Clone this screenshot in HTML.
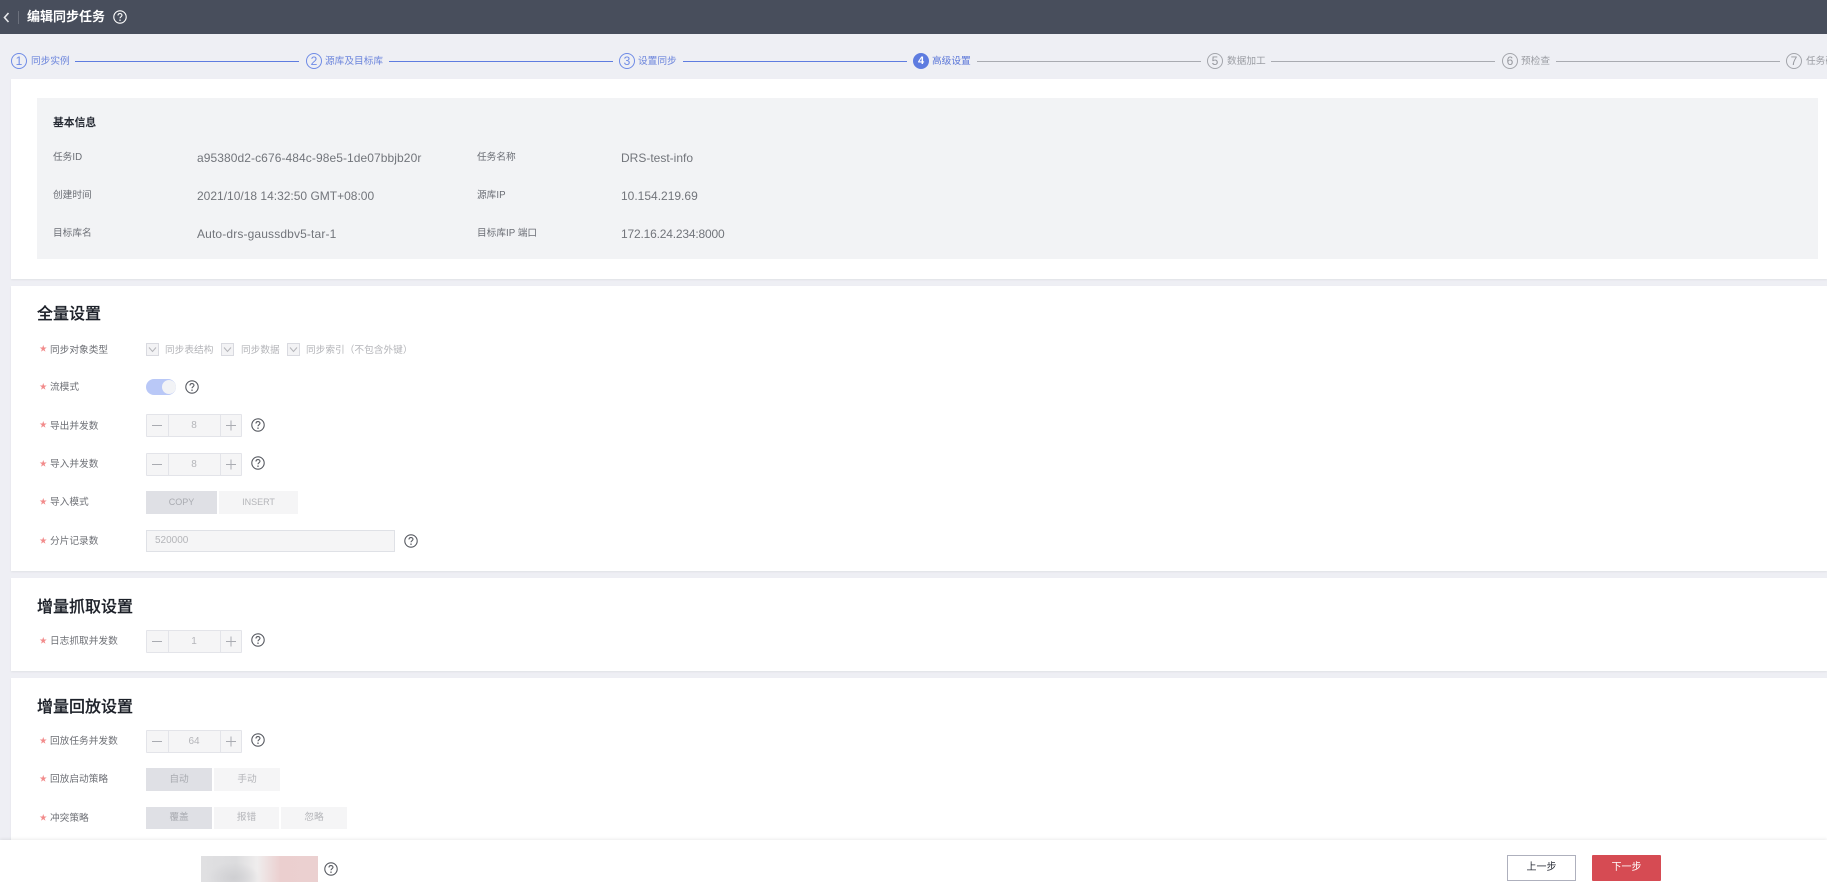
<!DOCTYPE html>
<html lang="zh">
<head>
<meta charset="utf-8">
<title>编辑同步任务</title>
<style>
*{box-sizing:border-box}
html,body{margin:0;padding:0;width:1827px;height:893px;overflow:hidden;background:#eeeff4;font-family:"Liberation Sans","Noto Sans CJK SC",sans-serif}
.a{position:absolute;white-space:nowrap}
.hdr{left:0;top:0;width:1827px;height:34px;background:#484e5c}
.pn{left:11px;width:1816px;background:#fff;box-shadow:0 1px 2px rgba(0,0,0,.06)}
.c{width:16px;height:16px;border-radius:50%;border:1px solid #6f8be6;color:#6f8be6;font-size:12px;line-height:14px;text-align:center;top:53px}
.c.g{border-color:#a3a5ab;color:#96989e}
.c.on{background:#5e7ce0;border-color:#5e7ce0;color:#fff;font-weight:bold;font-size:11px}
.st{font-size:9.7px;line-height:14px;top:55px;color:#6c85dc}
.st.g{color:#9b9da3}
.ln{height:1px;top:61px;background:#5e7ce0}
.ln.g{background:#a9abb1}
.k{font-size:9.7px;line-height:14px;color:#6b6e75}
.v{font-size:12px;line-height:14px;color:#72757b}
.t{left:37px;font-size:16px;line-height:22px;color:#1d2129;font-weight:500;-webkit-text-stroke:.2px #1d2129}
.s{left:39.5px;font-size:7.5px;line-height:14px;color:#f28b8b}
.l{left:50px;font-size:9.7px;line-height:14px;color:#6e7076}
.cb{width:13px;height:13px;background:#f3f3f5;border:1px solid #d9dae0;left:0}
.cb svg{display:block}
.ct{font-size:9.7px;line-height:14px;color:#b4b5b9;top:344px}
.num{left:146px;width:96px;height:23px;background:#f5f5f6;border:1px solid #e3e4e9;border-radius:1px;color:#b4b5b9;font-size:10px;line-height:22px;text-align:center}
.num i{position:absolute;top:0;height:21px;width:1px;background:#e3e4e9}
.num svg{position:absolute;top:5px}
.tab{height:23px;background:#f5f5f6;color:#b4b5b9;font-size:9.7px;line-height:23px;text-align:center}
.tab.on{background:#dfe0e5;color:#a9abb1}
.tab.e{font-size:9px}
.q{width:14px;height:14px}
</style>
</head>
<body>
<svg width="0" height="0" style="position:absolute"><defs><symbol id="h" viewBox="0 0 14 14"><circle cx="7" cy="7" r="6.2" fill="none" stroke="currentColor" stroke-width="1.1"/><path d="M5 5.5C5 4.3 5.9 3.6 7 3.6S9 4.3 9 5.3C9 6.6 7 6.7 7 8.2" fill="none" stroke="currentColor" stroke-width="1.1"/><circle cx="7" cy="10.1" r=".75" fill="currentColor"/></symbol></defs></svg>

<div class="a hdr"></div>
<svg class="a" style="left:3px;top:12px" width="7" height="11" viewBox="0 0 7 11"><path d="M5.5 1L1.5 5.5L5.5 10" fill="none" stroke="#e8e9ec" stroke-width="1.6"/></svg>
<div class="a" style="left:18px;top:11px;width:1px;height:13px;background:#6b707c"></div>
<div class="a" style="left:27px;top:8px;font-size:13px;line-height:18px;font-weight:bold;color:#fff">编辑同步任务</div>
<svg class="a q" style="left:113px;top:10px;color:#fff"><use href="#h"/></svg>

<div class="a c" style="left:11px">1</div><div class="a st" style="left:31px">同步实例</div><div class="a ln" style="left:75px;width:224px"></div>
<div class="a c" style="left:306px">2</div><div class="a st" style="left:325px">源库及目标库</div><div class="a ln" style="left:389px;width:224px"></div>
<div class="a c" style="left:619px">3</div><div class="a st" style="left:638px">设置同步</div><div class="a ln" style="left:683px;width:224px"></div>
<div class="a c on" style="left:913px">4</div><div class="a st" style="left:932px;color:#5a76d8">高级设置</div><div class="a ln g" style="left:977px;width:224px"></div>
<div class="a c g" style="left:1207px">5</div><div class="a st g" style="left:1227px">数据加工</div><div class="a ln g" style="left:1271px;width:224px"></div>
<div class="a c g" style="left:1502px">6</div><div class="a st g" style="left:1521px">预检查</div><div class="a ln g" style="left:1556px;width:224px"></div>
<div class="a c g" style="left:1786px">7</div><div class="a st g" style="left:1806px">任务确认</div>

<div class="a pn" style="top:79px;height:200px"></div>
<div class="a" style="left:37px;top:98px;width:1781px;height:161px;background:#f2f3f5"></div>
<div class="a" style="left:53px;top:116px;font-size:10.8px;line-height:14px;font-weight:bold;color:#262a33">基本信息</div>
<div class="a k" style="left:53px;top:151px">任务ID</div><div class="a v" style="left:197px;top:151px;letter-spacing:.08px">a95380d2-c676-484c-98e5-1de07bbjb20r</div>
<div class="a k" style="left:477px;top:151px">任务名称</div><div class="a v" style="left:621px;top:151px">DRS-test-info</div>
<div class="a k" style="left:53px;top:189px">创建时间</div><div class="a v" style="left:197px;top:189px">2021/10/18 14:32:50 GMT+08:00</div>
<div class="a k" style="left:477px;top:189px">源库IP</div><div class="a v" style="left:621px;top:189px">10.154.219.69</div>
<div class="a k" style="left:53px;top:227px">目标库名</div><div class="a v" style="left:197px;top:227px;letter-spacing:.14px">Auto-drs-gaussdbv5-tar-1</div>
<div class="a k" style="left:477px;top:227px">目标库IP 端口</div><div class="a v" style="left:621px;top:227px;letter-spacing:-.18px">172.16.24.234:8000</div>

<div class="a pn" style="top:286px;height:285px"></div>
<div class="a t" style="top:304px">全量设置</div>

<div class="a s" style="top:342px">★</div><div class="a l" style="top:344px">同步对象类型</div>
<div class="a cb" style="left:146px;top:343px"><svg width="11" height="11" viewBox="0 0 11 11"><path d="M2 3.5L5.5 7.5L9 3.5" fill="none" stroke="#b4b5b9" stroke-width="1"/></svg></div><div class="a ct" style="left:165px">同步表结构</div>
<div class="a cb" style="left:221px;top:343px"><svg width="11" height="11" viewBox="0 0 11 11"><path d="M2 3.5L5.5 7.5L9 3.5" fill="none" stroke="#b4b5b9" stroke-width="1"/></svg></div><div class="a ct" style="left:241px">同步数据</div>
<div class="a cb" style="left:287px;top:343px"><svg width="11" height="11" viewBox="0 0 11 11"><path d="M2 3.5L5.5 7.5L9 3.5" fill="none" stroke="#b4b5b9" stroke-width="1"/></svg></div><div class="a ct" style="left:306px">同步索引（不包含外键）</div>

<div class="a s" style="top:380px">★</div><div class="a l" style="top:381px">流模式</div>
<div class="a" style="left:146px;top:379px;width:30px;height:16px;border-radius:8px;background:#b9c8f7"></div>
<div class="a" style="left:162px;top:380px;width:14px;height:14px;border-radius:50%;background:#f2f3f6"></div>
<svg class="a q" style="left:185px;top:380px;color:#575a61"><use href="#h"/></svg>

<div class="a s" style="top:418px">★</div><div class="a l" style="top:420px">导出并发数</div>
<div class="a num" style="top:414px">8<i style="left:21px"></i><i style="left:73px"></i><svg style="left:5px" width="10" height="11"><path d="M0 5.5H10" stroke="#a9abb1"/></svg><svg style="left:79px" width="10" height="11"><path d="M0 5.5H10M5 .5V10.5" stroke="#a9abb1"/></svg></div>
<svg class="a q" style="left:251px;top:418px;color:#575a61"><use href="#h"/></svg>

<div class="a s" style="top:457px">★</div><div class="a l" style="top:458px">导入并发数</div>
<div class="a num" style="top:453px">8<i style="left:21px"></i><i style="left:73px"></i><svg style="left:5px" width="10" height="11"><path d="M0 5.5H10" stroke="#a9abb1"/></svg><svg style="left:79px" width="10" height="11"><path d="M0 5.5H10M5 .5V10.5" stroke="#a9abb1"/></svg></div>
<svg class="a q" style="left:251px;top:456px;color:#575a61"><use href="#h"/></svg>

<div class="a s" style="top:495px">★</div><div class="a l" style="top:496px">导入模式</div>
<div class="a tab on e" style="left:146px;top:491px;width:71px">COPY</div>
<div class="a tab e" style="left:219px;top:491px;width:79px">INSERT</div>

<div class="a s" style="top:534px">★</div><div class="a l" style="top:535px">分片记录数</div>
<div class="a" style="left:146px;top:530px;width:249px;height:22px;background:#f5f5f6;border:1px solid #dfe1e6;color:#b4b5b9;font-size:10px;line-height:20px;padding-left:8px">520000</div>
<svg class="a q" style="left:404px;top:534px;color:#575a61"><use href="#h"/></svg>

<div class="a pn" style="top:578px;height:93px"></div>
<div class="a t" style="top:597px">增量抓取设置</div>
<div class="a s" style="top:634px">★</div><div class="a l" style="top:635px">日志抓取并发数</div>
<div class="a num" style="top:630px">1<i style="left:21px"></i><i style="left:73px"></i><svg style="left:5px" width="10" height="11"><path d="M0 5.5H10" stroke="#a9abb1"/></svg><svg style="left:79px" width="10" height="11"><path d="M0 5.5H10M5 .5V10.5" stroke="#a9abb1"/></svg></div>
<svg class="a q" style="left:251px;top:633px;color:#575a61"><use href="#h"/></svg>

<div class="a pn" style="top:678px;height:215px"></div>
<div class="a t" style="top:697px">增量回放设置</div>
<div class="a s" style="top:734px">★</div><div class="a l" style="top:735px">回放任务并发数</div>
<div class="a num" style="top:730px">64<i style="left:21px"></i><i style="left:73px"></i><svg style="left:5px" width="10" height="11"><path d="M0 5.5H10" stroke="#a9abb1"/></svg><svg style="left:79px" width="10" height="11"><path d="M0 5.5H10M5 .5V10.5" stroke="#a9abb1"/></svg></div>
<svg class="a q" style="left:251px;top:733px;color:#575a61"><use href="#h"/></svg>

<div class="a s" style="top:772px">★</div><div class="a l" style="top:773px">回放启动策略</div>
<div class="a tab on" style="left:146px;top:768px;width:66px">自动</div>
<div class="a tab" style="left:214px;top:768px;width:66px">手动</div>

<div class="a s" style="top:811px">★</div><div class="a l" style="top:812px">冲突策略</div>
<div class="a tab on" style="left:146px;top:807px;width:66px;height:22px;line-height:22px">覆盖</div>
<div class="a tab" style="left:214px;top:807px;width:65px;height:22px;line-height:22px">报错</div>
<div class="a tab" style="left:281px;top:807px;width:66px;height:22px;line-height:22px">忽略</div>

<div class="a" style="left:0;top:840px;width:1827px;height:53px;background:#fff;box-shadow:0 -1px 3px rgba(0,0,0,.08)"></div>
<div class="a" style="left:201px;top:856px;width:117px;height:26px;background:radial-gradient(ellipse 26px 16px at 28% 85%,#cfcfd2,transparent),linear-gradient(90deg,#e0e0e2 0%,#dcdcde 30%,#efeded 48%,#ebcfcf 68%,#ebd0d0 100%)"></div>
<svg class="a q" style="left:324px;top:862px;color:#575a61"><use href="#h"/></svg>
<div class="a" style="left:1507px;top:855px;width:69px;height:26px;border:1px solid #aeb0bd;background:#fff;color:#2a2e38;font-size:10px;line-height:24px;text-align:center">上一步</div>
<div class="a" style="left:1592px;top:855px;width:69px;height:26px;border-radius:1px;background:#d64b53;color:#fff;font-size:10px;line-height:26px;text-align:center">下一步</div>
</body>
</html>
